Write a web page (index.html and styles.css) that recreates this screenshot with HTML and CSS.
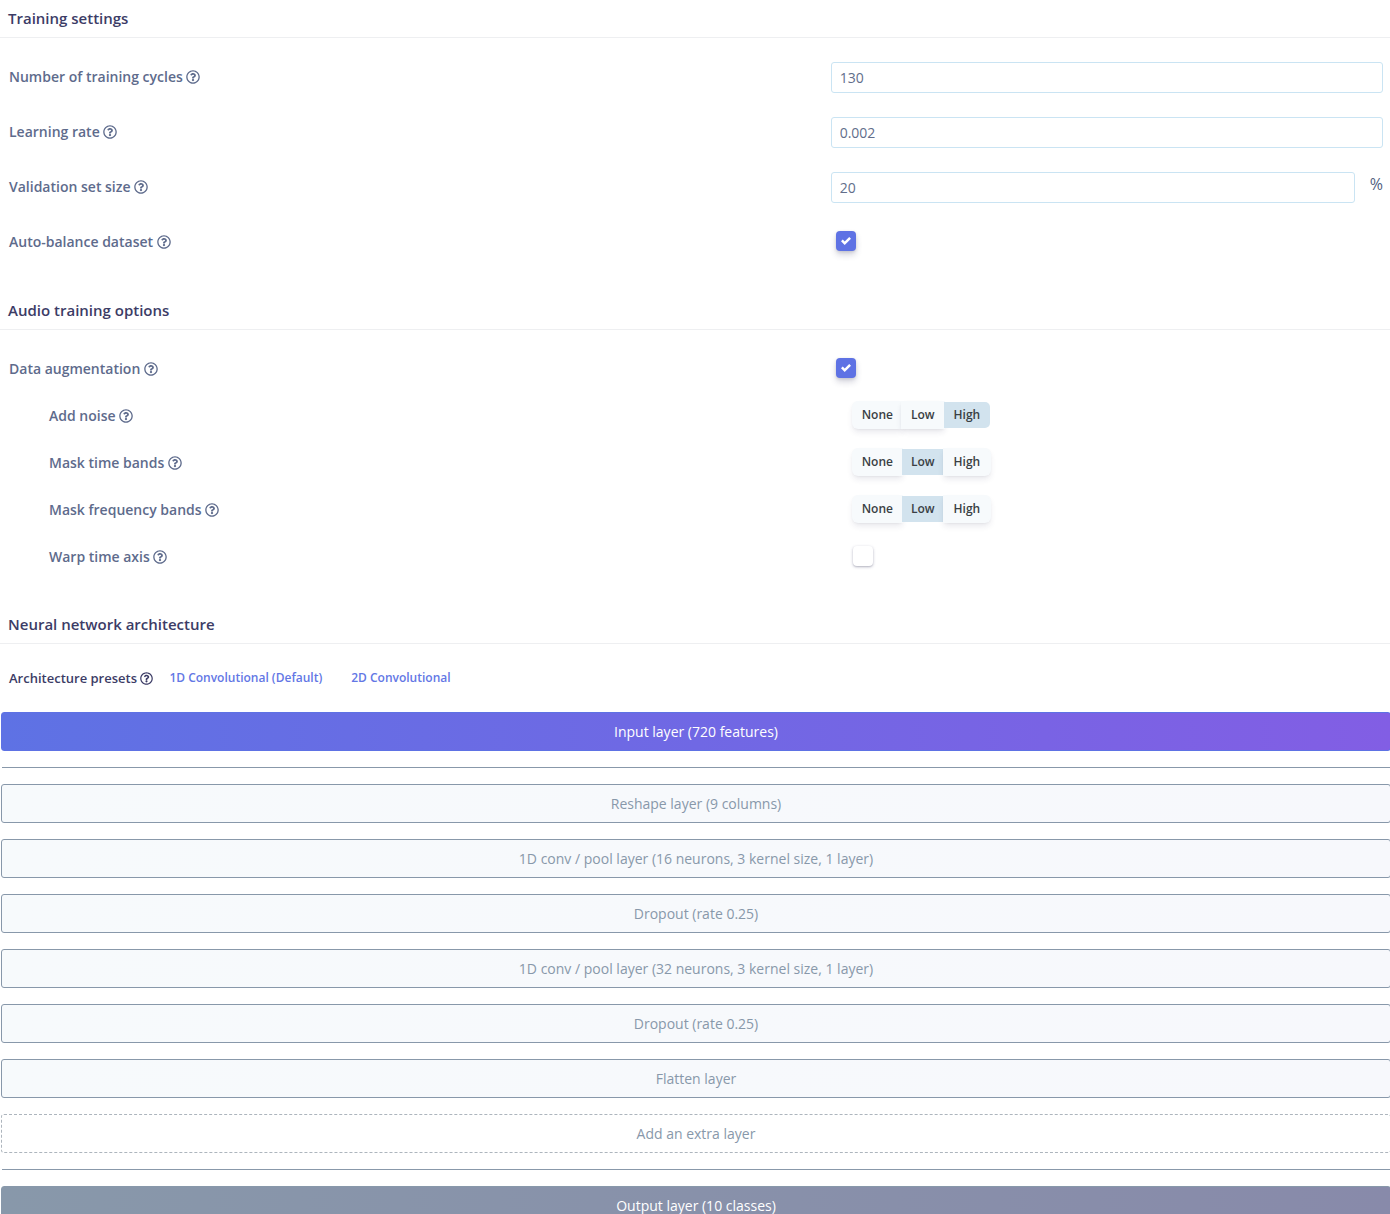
FILE: index.html
```html
<!DOCTYPE html>
<html lang="en">
<head>
<meta charset="utf-8">
<meta name="viewport" content="width=device-width, initial-scale=1">
<title>Training settings</title>
<link rel="stylesheet" href="styles.css">
</head>
<body>
<svg class="sprite" aria-hidden="true">
  <symbol id="help" viewBox="0 0 512 512"><path d="M256 8C119.043 8 8 119.083 8 256c0 136.997 111.043 248 248 248s248-111.003 248-248C504 119.083 392.957 8 256 8zm0 448c-110.532 0-200-89.431-200-200 0-110.495 89.472-200 200-200 110.491 0 200 89.471 200 200 0 110.53-89.431 200-200 200zm107.244-255.2c0 67.052-72.421 68.084-72.421 92.863V300c0 6.627-5.373 12-12 12h-45.647c-6.627 0-12-5.373-12-12v-8.659c0-35.745 27.1-50.034 47.579-61.516 17.561-9.845 28.324-16.541 28.324-29.579 0-17.246-21.999-28.693-39.784-28.693-23.189 0-33.894 10.977-48.942 29.969-4.057 5.12-11.46 6.071-16.666 2.124l-27.824-21.098c-5.107-3.872-6.251-11.066-2.644-16.363C184.846 131.491 214.94 112 261.794 112c49.071 0 101.45 38.304 101.45 88.8zM298 368c0 23.159-18.841 42-42 42s-42-18.841-42-42 18.841-42 42-42 42 18.841 42 42z"/></symbol>
</svg>
<main>
  <section class="section">
    <h2 class="heading">Training settings</h2>
    <div class="rows">
      <div class="row">
        <label class="label" for="cycles">Number of training cycles <svg class="help"><use href="#help"/></svg></label>
        <div class="field"><input class="input" id="cycles" type="text" value="130"></div>
      </div>
      <div class="row">
        <label class="label" for="rate">Learning rate <svg class="help"><use href="#help"/></svg></label>
        <div class="field"><input class="input" id="rate" type="text" value="0.002"></div>
      </div>
      <div class="row">
        <label class="label" for="validation">Validation set size <svg class="help"><use href="#help"/></svg></label>
        <div class="field"><input class="input" id="validation" type="text" value="20"><span class="unit">%</span></div>
      </div>
      <div class="row">
        <label class="label" for="balance">Auto-balance dataset <svg class="help"><use href="#help"/></svg></label>
        <div class="field field-check"><input class="check" id="balance" type="checkbox" checked></div>
      </div>
    </div>
  </section>

  <section class="section section-nested">
    <h2 class="heading">Audio training options</h2>
    <div class="rows rows-tight">
      <div class="row">
        <label class="label" for="augment">Data augmentation <svg class="help"><use href="#help"/></svg></label>
        <div class="field field-check"><input class="check" id="augment" type="checkbox" checked></div>
      </div>
      <div class="row row-sub">
        <span class="label" id="noise">Add noise <svg class="help"><use href="#help"/></svg></span>
        <div class="field field-sub"><div class="segments" role="group" aria-labelledby="noise"><button class="segment" type="button">None</button><button class="segment" type="button">Low</button><button class="segment active" type="button" aria-pressed="true">High</button></div></div>
      </div>
      <div class="row row-sub">
        <span class="label" id="time">Mask time bands <svg class="help"><use href="#help"/></svg></span>
        <div class="field field-sub"><div class="segments" role="group" aria-labelledby="time"><button class="segment" type="button">None</button><button class="segment active" type="button" aria-pressed="true">Low</button><button class="segment" type="button">High</button></div></div>
      </div>
      <div class="row row-sub">
        <span class="label" id="frequency">Mask frequency bands <svg class="help"><use href="#help"/></svg></span>
        <div class="field field-sub"><div class="segments" role="group" aria-labelledby="frequency"><button class="segment" type="button">None</button><button class="segment active" type="button" aria-pressed="true">Low</button><button class="segment" type="button">High</button></div></div>
      </div>
      <div class="row row-sub">
        <label class="label" for="warp">Warp time axis <svg class="help"><use href="#help"/></svg></label>
        <div class="field field-sub"><input class="check" id="warp" type="checkbox"></div>
      </div>
    </div>
  </section>

  <section>
    <h2 class="heading">Neural network architecture</h2>
    <div class="presets">
      <span class="presets-label">Architecture presets <svg class="help"><use href="#help"/></svg></span>
      <a class="preset" href="#1d">1D Convolutional (Default)</a>
      <a class="preset" href="#2d">2D Convolutional</a>
    </div>
    <div class="layers">
      <button class="layer layer-input" type="button">Input layer (720 features)</button>
      <hr class="divider">
      <button class="layer" type="button">Reshape layer (9 columns)</button>
      <button class="layer" type="button">1D conv / pool layer (16 neurons, 3 kernel size, 1 layer)</button>
      <button class="layer" type="button">Dropout (rate 0.25)</button>
      <button class="layer" type="button">1D conv / pool layer (32 neurons, 3 kernel size, 1 layer)</button>
      <button class="layer" type="button">Dropout (rate 0.25)</button>
      <button class="layer" type="button">Flatten layer</button>
      <button class="layer layer-add" type="button">Add an extra layer</button>
      <hr class="divider">
      <button class="layer layer-output" type="button">Output layer (10 classes)</button>
    </div>
  </section>
</main>
</body>
</html>
```
FILE: styles.css
```css
* { box-sizing: border-box; }

html { overflow-x: hidden; }

body {
  margin: 0;
  background: #fff;
  color: #525f7f;
  font-family: "Open Sans", "Noto Sans", sans-serif;
  font-size: 14px;
  line-height: 20px;
}

button, input { font: inherit; margin: 0; }

.sprite { display: none; }

.section { padding-bottom: 34px; }
.section-nested { padding-bottom: 33px; }

.heading {
  margin: 0;
  padding: 8px 8px 9px;
  border-bottom: 1px solid #eeeff1;
  color: #3c3c66;
  font-size: 15px;
  font-weight: 600;
}

.rows {
  display: grid;
  gap: 24px;
  padding: 24px 7px 0 9px;
}
.rows-tight { gap: 16px; }

.row {
  display: grid;
  grid-template-columns: minmax(0, 1fr) 40.2%;
  align-items: center;
  min-height: 31px;
}

.label { padding-bottom: 2px; color: #5e6b8c; font-weight: 600; }
.row-sub .label { padding-left: 40px; }

.help {
  width: 14px;
  height: 14px;
  fill: currentColor;
  vertical-align: -2px;
}

.field { display: flex; align-items: center; }
.field-check { padding: 0 0 4px 5px; }
.field-sub { padding: 0 0 4px 22px; }

.input {
  flex: 1;
  min-width: 0;
  height: 31px;
  padding: 0 8px;
  border: 1px solid #cae4f3;
  border-radius: 3px;
  background: #fff;
  color: #626e8b;
}

.unit {
  align-self: flex-start;
  margin-left: 15px;
  font-size: 16px;
  line-height: 24px;
}

.check {
  appearance: none;
  width: 20px;
  height: 20px;
  border-radius: 4px;
  background: #fff;
  box-shadow: 0 1px 3px rgba(50, 50, 93, .35), 0 1px 1px rgba(0, 0, 0, .06);
}
.check:checked {
  background: #5e72e4 url("data:image/svg+xml,%3Csvg xmlns='http://www.w3.org/2000/svg' viewBox='0 0 8 8'%3E%3Cpath fill='%23fff' d='M6.564.75l-3.59 3.612-1.538-1.55L0 4.26 2.974 7.25 8 2.193z'/%3E%3C/svg%3E") center / 10px 10px no-repeat;
  box-shadow: 0 4px 6px rgba(50, 50, 93, .2), 0 1px 3px rgba(0, 0, 0, .12);
}

.segments { display: flex; }
.segment {
  height: 26px;
  padding: 0 9px;
  border: 0;
  background: #f7fafc;
  color: #3a3f44;
  font-size: 12px;
  line-height: 24px;
  font-weight: 600;
  box-shadow: 0 0 0 1px #f7fafc, 0 4px 6px rgba(50, 50, 93, .11), 0 1px 3px rgba(0, 0, 0, .08);
}
.segment:first-child { border-radius: 5px 0 0 5px; }
.segment:last-child { border-radius: 0 5px 5px 0; padding: 0 10px; }
.segment.active { background: #d2e3ee; box-shadow: none; }

.presets {
  display: flex;
  align-items: center;
  padding: 24px 9px;
  color: #3c3c66;
  font-size: 13px;
  font-weight: 600;
}
.presets .help { width: 13px; height: 13px; }
.preset {
  margin-left: 16px;
  color: #6377e5;
  font-size: 12px;
  font-weight: 600;
  text-decoration: none;
}
.preset + .preset { margin-left: 29px; }

/* The stack runs just past the right edge of the panel. */
.layers {
  display: grid;
  gap: 16px;
  margin: 0 -1px 0 1px;
}

.layer {
  height: 39px;
  padding: 0 8px;
  border: 1px solid #8898aa;
  border-radius: 3px;
  background: linear-gradient(87deg, #f7fafc, #f7f8fc);
  color: #8898aa;
}
.layer-input {
  border-color: #5e72e4;
  background: linear-gradient(87deg, #5e72e4, #825ee4);
  color: #fff;
}
.layer-add { border-style: dashed; border-color: #adb5bd; background: #fff; }
.layer-output { background: linear-gradient(87deg, #8898aa, #888aaa); color: #fff; }

.divider {
  width: auto;
  height: 1px;
  margin: 0 0 0 1px;
  border: 0;
  background: #8898aa;
}
```
